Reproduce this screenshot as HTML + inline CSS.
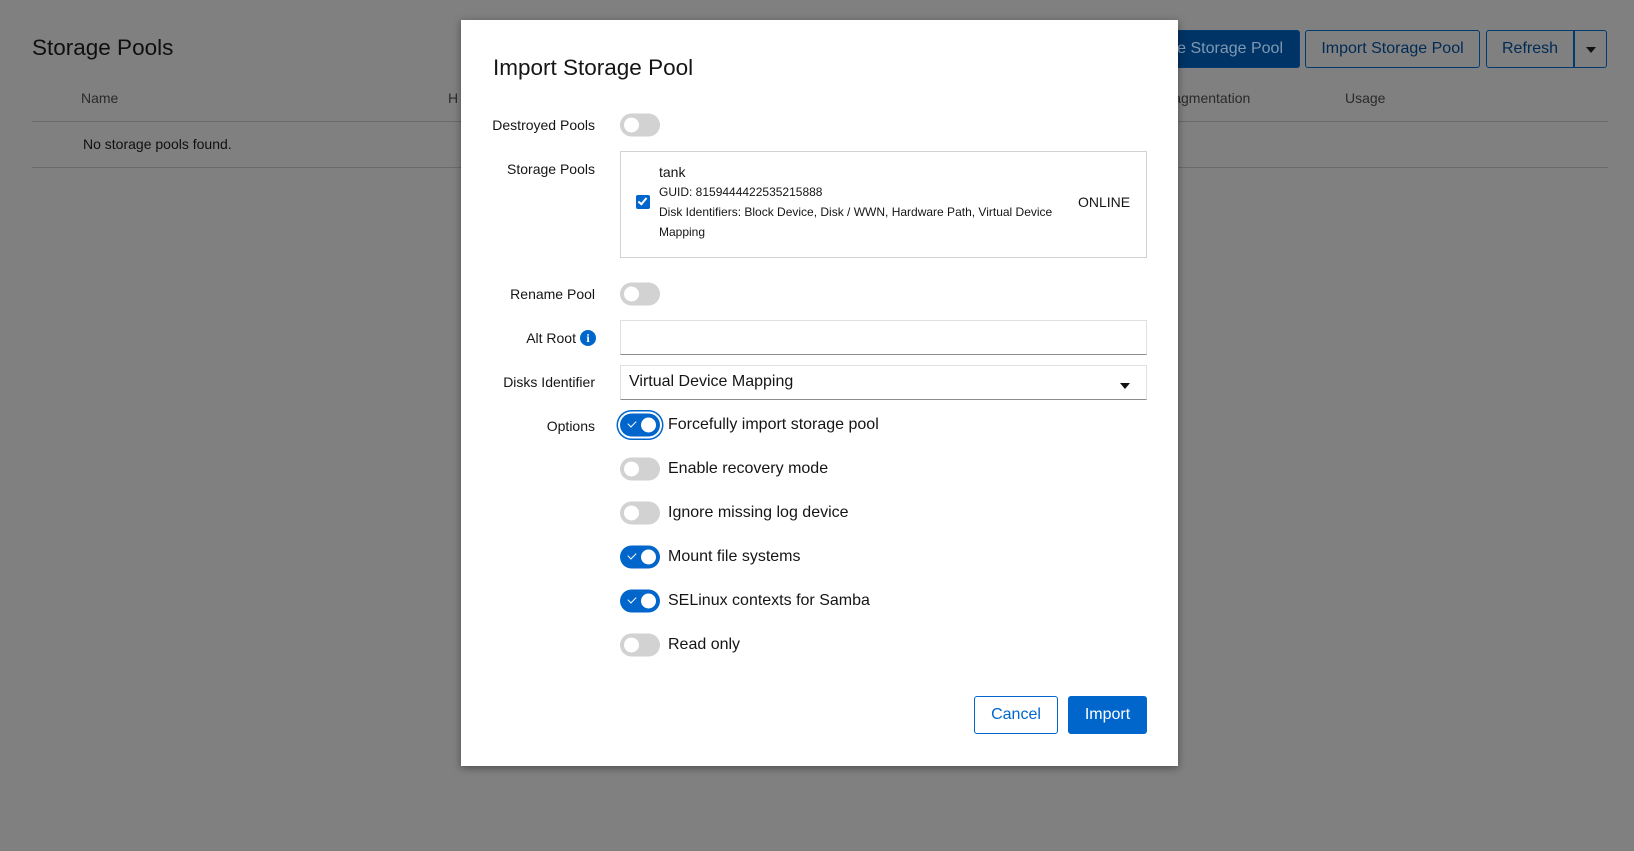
<!DOCTYPE html>
<html><head><meta charset="utf-8"><style>
*{box-sizing:border-box;margin:0;padding:0}
body{width:1634px;height:851px;overflow:hidden;background:#808080;font-family:"Liberation Sans",Arial,sans-serif;position:relative;color:#151515}
.a{position:absolute;white-space:nowrap}
.bg{color:#0f0f0f}
.btn{position:absolute;border:1px solid #003a70;border-radius:3px;color:#002a55;font-size:16px;display:flex;align-items:center;justify-content:center}
.modal{position:absolute;left:461px;top:20px;width:717px;height:746px;background:#fff;box-shadow:0 2px 8px rgba(0,0,0,.4)}
.lbl{position:absolute;right:calc(717px - 134px);font-size:14px;color:#151515;white-space:nowrap;transform:translateY(-50%)}
.tg{position:absolute;left:159px;width:40px;height:23px;border-radius:12px;background:#d2d2d2;transform:translateY(-50%)}
.tg::after{content:"";position:absolute;left:4px;top:4px;width:15px;height:15px;border-radius:50%;background:#fff}
.tg.on{background:#0066cc}
.tg.on::after{left:21px}
.tg.on::before{content:"";position:absolute;left:8px;top:7px;width:7px;height:4px;border-left:1.5px solid #fff;border-bottom:1.5px solid #fff;transform:rotate(-45deg)}
.opt{position:absolute;left:207px;font-size:16px;transform:translateY(-50%);white-space:nowrap}
</style></head><body>
<div class="a bg" style="left:32px;top:35px;font-size:22.5px">Storage Pools</div>
<div class="a" style="left:81px;top:90px;font-size:14px;color:#2a2a2a">Name</div>
<div class="a" style="left:448px;top:90px;font-size:14px;color:#2a2a2a">H</div>
<div class="a" style="left:1160px;top:90px;font-size:14px;color:#2a2a2a">Fragmentation</div>
<div class="a" style="left:1345px;top:90px;font-size:14px;color:#2a2a2a">Usage</div>
<div class="a" style="left:32px;top:121px;width:1576px;height:1px;background:#6a6a6a"></div>
<div class="a" style="left:83px;top:136px;font-size:14px;color:#0f0f0f">No storage pools found.</div>
<div class="a" style="left:32px;top:167px;width:1576px;height:1px;background:#6a6a6a"></div>
<div class="btn" style="left:1100px;top:30px;width:200px;height:38px;background:#003366;color:#7f99b3;justify-content:flex-end;padding-right:16px">Create Storage Pool</div>
<div class="btn" style="left:1305px;top:30px;width:175px;height:38px">Import Storage Pool</div>
<div class="btn" style="left:1486px;top:30px;width:88px;height:38px;border-radius:3px 0 0 3px">Refresh</div>
<div class="btn" style="left:1574px;top:30px;width:33px;height:38px;border-radius:0 3px 3px 0"><span style="border:5px solid transparent;border-top:6px solid #111;margin-top:6px"></span></div>

<div class="modal">
<div class="a" style="left:32px;top:35px;font-size:22.5px;color:#151515">Import Storage Pool</div>
<div class="lbl" style="top:105px">Destroyed Pools</div><div class="tg" style="top:105px"></div>
<div class="lbl" style="top:149px">Storage Pools</div>
<div class="a" style="left:159px;top:131px;width:527px;height:107px;border:1px solid #d2d2d2"></div>
<div class="a" style="left:175px;top:175px;width:14px;height:14px;background:#0066cc;border-radius:2px"><div style="position:absolute;left:4px;top:1px;width:5px;height:9px;border-right:2px solid #fff;border-bottom:2px solid #fff;transform:rotate(40deg)"></div></div>
<div class="a" style="left:198px;top:144px;font-size:14px">tank</div>
<div class="a" style="left:198px;top:165px;font-size:12px">GUID: 8159444422535215888</div>
<div class="a" style="left:198px;top:185px;font-size:12px">Disk Identifiers: Block Device, Disk / WWN, Hardware Path, Virtual Device</div>
<div class="a" style="left:198px;top:205px;font-size:12px">Mapping</div>
<div class="a" style="left:617px;top:174px;font-size:14px">ONLINE</div>
<div class="lbl" style="top:274px">Rename Pool</div><div class="tg" style="top:274px"></div>
<div class="lbl" style="top:318px;right:602px">Alt Root</div>
<div class="a" style="left:119px;top:310px;width:16px;height:16px;border-radius:50%;background:#0066cc;color:#fff;font:bold 12px 'Liberation Serif',serif;text-align:center;line-height:16px">i</div>
<div class="a" style="left:159px;top:300px;width:527px;height:35px;border:1px solid #e0e0e0;border-bottom:1px solid #8a8d90"></div>
<div class="lbl" style="top:362px">Disks Identifier</div>
<div class="a" style="left:159px;top:345px;width:527px;height:35px;border:1px solid #e0e0e0;border-bottom:1px solid #8a8d90"></div>
<div class="a" style="left:168px;top:353px;font-size:16px">Virtual Device Mapping</div>
<div class="a" style="left:659px;top:363px;border:5px solid transparent;border-top:6px solid #111"></div>
<div class="lbl" style="top:406px">Options</div>
<div class="tg on" style="top:405px;box-shadow:0 0 0 2px #fff,0 0 0 3.5px #0066cc"></div><div class="opt" style="top:405px">Forcefully import storage pool</div>
<div class="tg" style="top:449px"></div><div class="opt" style="top:449px">Enable recovery mode</div>
<div class="tg" style="top:493px"></div><div class="opt" style="top:493px">Ignore missing log device</div>
<div class="tg on" style="top:537px"></div><div class="opt" style="top:537px">Mount file systems</div>
<div class="tg on" style="top:581px"></div><div class="opt" style="top:581px">SELinux contexts for Samba</div>
<div class="tg" style="top:625px"></div><div class="opt" style="top:625px">Read only</div>
<div class="btn" style="left:513px;top:676px;width:84px;height:38px;border-color:#0066cc;color:#0066cc">Cancel</div>
<div class="btn" style="left:607px;top:676px;width:79px;height:38px;border-color:#0066cc;background:#0066cc;color:#fff">Import</div>
</div>
</body></html>
